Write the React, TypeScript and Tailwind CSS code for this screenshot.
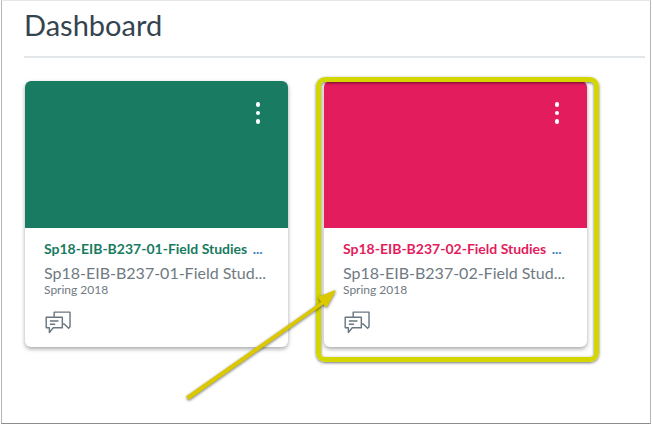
function ChatIcon() {
  return (
    <svg width="27" height="24" viewBox="0 0 28 25" fill="none" stroke="#6b7780" strokeWidth="1.5">
      <path d="M9.5 6.5V1.2H26V16.5L24.5 18L20 13.5H18" strokeLinejoin="round" />
      <path d="M1.2 6.5H18V17.5H8.5L4.5 22.5V17.5H1.2Z" strokeLinejoin="round" />
      <path d="M5 10.5H14M5 13.8H10.5" />
    </svg>
  );
}

function CourseCard({ code, color, textColor }: { code: string; color: string; textColor: string }) {
  return (
    <div className="w-[263px] h-[266px] shrink-0 bg-white rounded-[6px] shadow-[0_2px_4px_rgba(0,0,0,0.35)] overflow-hidden flex flex-col">
      <div className={`h-[147px] flex justify-end pt-[21px] pr-[28px] ${color}`}>
        <div className="flex flex-col gap-[4px]">
          <span className="w-[4.5px] h-[4.5px] rounded-full bg-white" />
          <span className="w-[4.5px] h-[4.5px] rounded-full bg-white" />
          <span className="w-[4.5px] h-[4.5px] rounded-full bg-white" />
        </div>
      </div>
      <div className="flex flex-col pl-[19px] pr-[18px] pt-[12px]">
        <div className="text-[14px] leading-[18px] font-bold whitespace-nowrap">
          <span className={textColor}>{code}-Field Studies</span>
          <span className="ml-[2px] text-[#3b82c4]"> ...</span>
        </div>
        <div className="mt-[4px] text-[16px] leading-[22px] text-[#6f7a82] whitespace-nowrap">{code}-Field Stud...</div>
        <div className="-mt-[1px] text-[12px] leading-[14px] text-[#6f7a82]">Spring 2018</div>
        <div className="mt-[14px] ml-[1px]">
          <ChatIcon />
        </div>
      </div>
    </div>
  );
}

export default function App() {
  return (
    <div className="relative w-[652px] h-[425px] bg-white overflow-hidden font-['Lato','Open_Sans',sans-serif] pl-px pr-px pb-[1px]">
      <div className="h-full border-l border-r border-b border-t border-t-[#e6e6e6] border-l-[#b5b5b5] border-r-[#b5b5b5] border-b-[#8c8c8c] pl-[22px] pr-[5px]">
        <h1 className="pt-[6px] h-[55px] text-[29px] leading-[36px] text-[#34444f]">Dashboard</h1>
        <div className="h-[2px] bg-[#e2e6e9]" />
        <div className="flex pt-[23px] pl-[1px] gap-[36px]">
          <CourseCard code="Sp18-EIB-B237-01" color="bg-[#197b62]" textColor="text-[#197b62]" />
          <CourseCard code="Sp18-EIB-B237-02" color="bg-[#e31c5d]" textColor="text-[#e31c5d]" />
        </div>
      </div>
      {/* callout highlight */}
      <div className="absolute left-[316px] top-[77px] w-[283px] h-[285px] border-[5px] border-[#d4d600] rounded-[9px] shadow-[0_1px_3px_rgba(0,0,0,0.55),inset_0_1px_3px_rgba(0,0,0,0.55)]" />
      {/* callout arrow */}
      <svg className="absolute left-0 top-0" width="652" height="425" viewBox="0 0 652 425" style={{ filter: 'drop-shadow(0 1px 1.5px rgba(0,0,0,0.55))' }}>
        <path d="M187 396.5L322 302L319 297.5L335 291L326.5 306.5L323.5 303.5L189 399Z" fill="#dcc800" stroke="#dcc800" strokeWidth="1.4" strokeLinejoin="round" />
      </svg>
    </div>
  );
}
